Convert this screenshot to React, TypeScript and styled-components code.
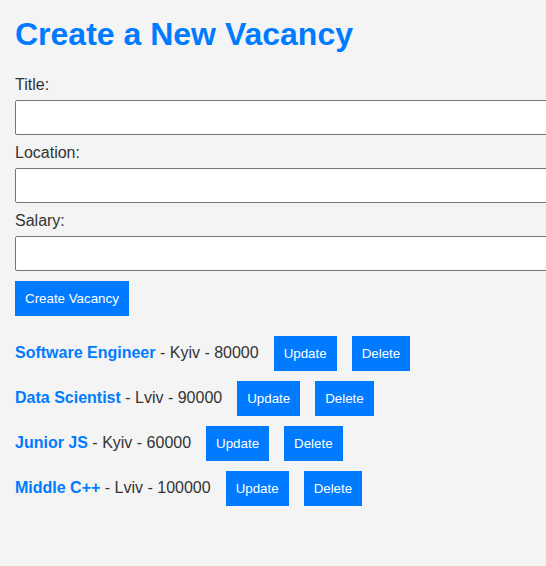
import React from 'react';
import styled, { createGlobalStyle } from 'styled-components';

const GlobalStyle = createGlobalStyle`
  html, body {
    margin: 0;
    padding: 0;
    background-color: #f4f4f4;
    overflow: hidden;
  }

  body {
    font-family: 'Liberation Sans', Arial, sans-serif;
    color: #333;
  }
`;

const Page = styled.div`
  padding: 16px 15px 0;
  overflow: hidden;
`;

const Heading = styled.h1`
  margin: 0 0 23px;
  font-size: 32px;
  font-weight: bold;
  line-height: normal;
  color: #007bff;
`;

const Form = styled.form`
  display: flex;
  flex-direction: column;
  align-items: flex-start;
`;

const Label = styled.label`
  display: block;
  font-size: 16px;
  line-height: 18px;
  margin-bottom: 6px;
`;

const Input = styled.input`
  box-sizing: border-box;
  width: calc(100% + 22px);
  height: 35px;
  margin: 0 0 9px;
  padding: 0 10px;
  border: 1px solid #767676;
  border-radius: 2px;
  background: #fff;
  font-family: inherit;
  font-size: 16px;
`;

const Button = styled.button`
  padding: 10px;
  border: none;
  border-radius: 0;
  background-color: #007bff;
  color: #fff;
  font-family: 'Liberation Sans', Arial, sans-serif;
  font-size: 13.333px;
  line-height: 15px;
  cursor: pointer;
`;

const SubmitButton = styled(Button)`
  margin-top: 1px;
`;

const List = styled.ul`
  list-style: none;
  margin: 20px 0 0;
  padding: 0;
`;

const Row = styled.li<{ $indent?: number }>`
  display: flex;
  align-items: baseline;
  gap: 15px;
  margin-bottom: 10px;
  padding-left: ${(p) => p.$indent ?? 0}px;
  font-size: 16px;
`;

const Name = styled.strong`
  color: #007bff;
`;

const vacancies = [
  { title: 'Software Engineer', location: 'Kyiv', salary: 80000 },
  { title: 'Data Scientist', location: 'Lviv', salary: 90000 },
  { title: 'Junior JS', location: 'Kyiv', salary: 60000 },
  { title: 'Middle C++', location: 'Lviv', salary: 100000 },
];

export default function App() {
  return (
    <Page>
      <GlobalStyle />
      <Heading>Create a New Vacancy</Heading>
      <Form onSubmit={(e) => e.preventDefault()}>
        <Label htmlFor="title">Title:</Label>
        <Input id="title" type="text" />
        <Label htmlFor="location">Location:</Label>
        <Input id="location" type="text" />
        <Label htmlFor="salary">Salary:</Label>
        <Input id="salary" type="text" />
        <SubmitButton type="submit">Create Vacancy</SubmitButton>
      </Form>
      <List>
        {vacancies.map((v) => (
          <Row key={v.title}>
            <span>
              <Name>{v.title}</Name> - {v.location} - {v.salary}
            </span>
            <Button>Update</Button>
            <Button>Delete</Button>
          </Row>
        ))}
      </List>
    </Page>
  );
}
